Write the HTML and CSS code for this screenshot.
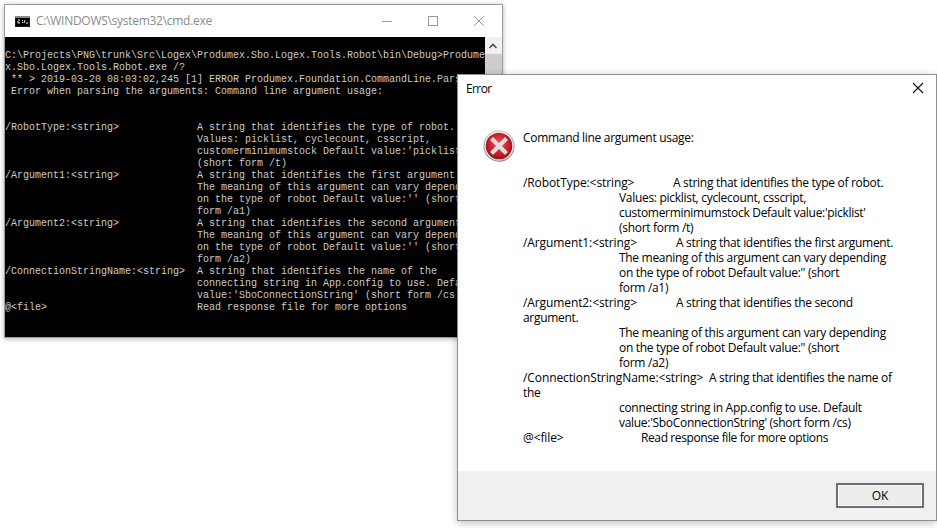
FILE: index.html
```html
<!DOCTYPE html>
<html lang="en">
<head>
<meta charset="utf-8">
<title>cmd.exe and Error dialog</title>
<link rel="stylesheet" href="styles.css">
</head>
<body>
<section class="window console">
  <header class="titlebar">
    <svg class="cmd-icon" width="15" height="11" viewBox="0 0 15 11"><rect width="15" height="11" fill="#1c1c1c"/><rect y="0" width="15" height="2" fill="#8a8a8a"/><rect x="1" y="2" width="13" height="8" fill="#000"/><path d="M3 4h2M3 5v2M3 7h2M7 4.500h1M7 6.500h1M10 4l-1 3M11 7h2" stroke="#e8e8e8" stroke-width="1" fill="none"/></svg>
    <span class="title-text">C:\WINDOWS\system32\cmd.exe</span>
    <div class="controls">
      <svg width="46" height="32" viewBox="0 0 46 32"><path d="M18 16.500h10" stroke="#9a9a9a"/></svg>
      <svg width="46" height="32" viewBox="0 0 46 32"><rect x="18.500" y="11.500" width="9" height="9" fill="none" stroke="#9a9a9a"/></svg>
      <svg width="46" height="32" viewBox="0 0 46 32"><path d="M18 11l10 10M28 11l-10 10" stroke="#9a9a9a"/></svg>
    </div>
  </header>
  <div class="console-body">
<pre class="console-text">C:\Projects\PNG\trunk\Src\Logex\Produmex.Sbo.Logex.Tools.Robot\bin\Debug>Produme
x.Sbo.Logex.Tools.Robot.exe /?
 ** > 2019-03-20 08:03:02,245 [1] ERROR Produmex.Foundation.CommandLine.Parser
 Error when parsing the arguments: Command line argument usage:


/RobotType:&lt;string&gt;             A string that identifies the type of robot.
                                Values: picklist, cyclecount, csscript,
                                customerminimumstock Default value:'picklist'
                                (short form /t)
/Argument1:&lt;string&gt;             A string that identifies the first argument.
                                The meaning of this argument can vary depending
                                on the type of robot Default value:'' (short
                                form /a1)
/Argument2:&lt;string&gt;             A string that identifies the second argument.
                                The meaning of this argument can vary depending
                                on the type of robot Default value:'' (short
                                form /a2)
/ConnectionStringName:&lt;string&gt;  A string that identifies the name of the
                                connecting string in App.config to use. Default
                                value:'SboConnectionString' (short form /cs)
@&lt;file&gt;                         Read response file for more options</pre>
    <div class="scrollbar">
      <svg width="16" height="17" viewBox="0 0 16 17"><path d="M4.500 11L8 7.500 11.500 11" fill="none" stroke="#505050" stroke-width="1.600"/></svg>
      <div class="thumb"></div>
    </div>
  </div>
</section>

<section class="window dialog">
  <header class="dialog-title">
    <span class="dialog-name">Error</span>
    <svg width="12" height="12" viewBox="0 0 12 12"><path d="M1 1l10 10M11 1L1 11" stroke="#111" stroke-width="1.100"/></svg>
  </header>
  <div class="dialog-body">
    <svg class="error-icon" width="32" height="32" viewBox="0 0 32 32">
      <defs>
        <linearGradient id="ring" x1="0" y1="0" x2="0" y2="1"><stop offset="0" stop-color="#c9c9c9"/><stop offset="1" stop-color="#8f8f8f"/></linearGradient>
        <radialGradient id="red" cx=".5" cy=".42" r=".62"><stop offset="0" stop-color="#e8585c"/><stop offset=".6" stop-color="#c8202a"/><stop offset="1" stop-color="#8e0a10"/></radialGradient>
      </defs>
      <circle cx="16" cy="16" r="15.700" fill="url(#ring)"/>
      <circle cx="16" cy="16" r="14.400" fill="#f4f4f4"/>
      <circle cx="16" cy="16" r="13.300" fill="url(#red)"/>
      <path d="M10 10l12 12M22 10l-12 12" stroke="#e6dede" stroke-width="4.200" stroke-linecap="square"/>
    </svg>
    <div class="message">
      <p class="lead">Command line argument usage:</p>
      <p class="row"><span class="opt opt-robot">/RobotType:&lt;string&gt;</span>A string that identifies the type of robot.</p>
      <p class="row cont">Values: picklist, cyclecount, csscript,</p>
      <p class="row cont">customerminimumstock Default value:'picklist'</p>
      <p class="row cont">(short form /t)</p>
      <p class="row"><span class="opt opt-arg">/Argument1:&lt;string&gt;</span>A string that identifies the first argument.</p>
      <p class="row cont">The meaning of this argument can vary depending</p>
      <p class="row cont">on the type of robot Default value:'' (short</p>
      <p class="row cont">form /a1)</p>
      <p class="row"><span class="opt opt-arg">/Argument2:&lt;string&gt;</span>A string that identifies the second</p>
      <p class="row">argument.</p>
      <p class="row cont">The meaning of this argument can vary depending</p>
      <p class="row cont">on the type of robot Default value:'' (short</p>
      <p class="row cont">form /a2)</p>
      <p class="row"><span class="opt opt-conn">/ConnectionStringName:&lt;string&gt;</span>A string that identifies the name of</p>
      <p class="row">the</p>
      <p class="row cont">connecting string in App.config to use. Default</p>
      <p class="row cont">value:'SboConnectionString' (short form /cs)</p>
      <p class="row"><span class="opt opt-file">@&lt;file&gt;</span><span class="tight">Read response file for more options</span></p>
    </div>
  </div>
  <footer class="dialog-footer">
    <button class="ok" type="button">OK</button>
  </footer>
</section>
</body>
</html>
```

FILE: styles.css
```css
html, body {
  margin: 0;
  height: 100%;
  background: #fff;
  overflow: hidden;
}
.window {
  position: absolute;
  box-sizing: border-box;
  display: flex;
  flex-direction: column;
}
.console {
  left: 4px;
  top: 4px;
  width: 499px;
  height: 334px;
  border: 1px solid #9c9c9c;
  box-shadow: 0 1px 5px rgba(0, 0, 0, .3);
  background: #fff;
}
.titlebar {
  height: 32px;
  flex: none;
  display: flex;
  align-items: center;
  padding-left: 10px;
  font: 12px/16px "Open Sans", sans-serif;
  color: #8a8a8a;
}
.cmd-icon { margin-right: 6px; }
.title-text { letter-spacing: -.28px; }
.controls {
  margin-left: auto;
  display: flex;
  gap: 0;
}
.controls svg { display: block; }
.console-body {
  flex: 1;
  min-height: 0;
  display: flex;
  background: #000;
  overflow: hidden;
}
.console-text {
  flex: 0 0 480px;
  width: 480px;
  margin: 0;
  padding-top: 13px;
  overflow: hidden;
  font: 10px/12px "Liberation Mono", monospace;
  color: #ccc;
}
.scrollbar {
  width: 17px;
  background: #f0f0f0;
  margin-left: auto;
  height: 100%;
}
.scrollbar svg { display: block; }
.thumb {
  height: 255px;
  background: #cdcdcd;
}
.dialog {
  left: 457px;
  top: 74px;
  width: 480px;
  height: 447px;
  border: 1px solid #8f8f8f;
  background: #fff;
  box-shadow: 0 2px 8px rgba(0, 0, 0, .25);
  font: 12px/15px "Open Sans", sans-serif;
  color: #000;
}
.dialog-title {
  height: 26px;
  flex: none;
  display: flex;
  align-items: center;
  justify-content: space-between;
  padding: 0 12px 0 8px;
}
.dialog-name { letter-spacing: -.6px; }
.dialog-body {
  flex: 1;
  display: flex;
  align-items: flex-start;
  padding: 29px 0 0 25px;
}
.error-icon { flex: none; }
.message {
  margin-left: 8px;
  flex: 1;
  letter-spacing: -.3px;
}
.message p {
  margin: 0;
  white-space: nowrap;
}
.lead { margin-bottom: 30px !important; }
.cont { padding-left: 96px; }
.opt {
  display: inline-block;
  letter-spacing: -.1px;
}
.tight { letter-spacing: -.39px; }
.opt-robot { width: 150px; }
.opt-arg { width: 153px; }
.opt-conn { width: 186px; }
.opt-file { width: 118px; }
.dialog-footer {
  flex: none;
  height: 49px;
  background: #f0f0f0;
  display: flex;
  align-items: center;
  justify-content: flex-end;
  padding: 0 12px 0 0;
}
.ok {
  box-sizing: border-box;
  width: 88px;
  height: 25px;
  margin-bottom: 1px;
  background: #ececec;
  border: 2px solid #6e6e6e;
  box-shadow: inset 0 0 0 1px #f8f8f8;
  font: 12px/15px "Open Sans", sans-serif;
  color: #000;
  padding: 0;
}
```
